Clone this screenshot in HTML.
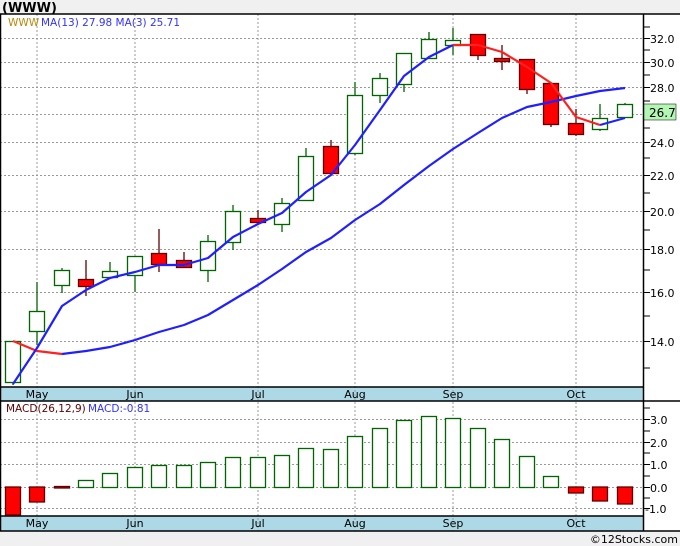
<!DOCTYPE html>
<html><head><style>
body{margin:0;background:#f0f0f0;width:680px;height:546px;overflow:hidden;font-family:"DejaVu Sans",Verdana,sans-serif}
</style></head><body>
<svg width="680" height="546" xmlns="http://www.w3.org/2000/svg" style="position:absolute;left:0;top:0" font-family="DejaVu Sans, Verdana, sans-serif">
<rect x="0" y="14" width="680" height="517" fill="#fff"/>
<text x="2" y="12" font-size="13" font-weight="bold" fill="#000">(WWW)</text>
<rect x="0" y="387" width="643" height="14" fill="#add8e6"/>
<rect x="0" y="516" width="643" height="15" fill="#add8e6"/>
<g stroke="#999" stroke-dasharray="2,2" stroke-width="1">
<line x1="37" y1="14" x2="37" y2="531"/><line x1="135" y1="14" x2="135" y2="531"/>
<line x1="258" y1="14" x2="258" y2="531"/><line x1="355" y1="14" x2="355" y2="531"/>
<line x1="453" y1="14" x2="453" y2="531"/><line x1="576" y1="14" x2="576" y2="531"/>
<line x1="0" y1="38.5" x2="643" y2="38.5"/><line x1="0" y1="62.5" x2="643" y2="62.5"/><line x1="0" y1="87.5" x2="643" y2="87.5"/><line x1="0" y1="114.5" x2="643" y2="114.5"/><line x1="0" y1="142.5" x2="643" y2="142.5"/><line x1="0" y1="175.5" x2="643" y2="175.5"/><line x1="0" y1="211.5" x2="643" y2="211.5"/><line x1="0" y1="249.5" x2="643" y2="249.5"/><line x1="0" y1="292.5" x2="643" y2="292.5"/><line x1="0" y1="341.5" x2="643" y2="341.5"/>
<line x1="0" y1="419.5" x2="643" y2="419.5"/><line x1="0" y1="442.5" x2="643" y2="442.5"/><line x1="0" y1="464.5" x2="643" y2="464.5"/><line x1="0" y1="487.5" x2="643" y2="487.5"/><line x1="0" y1="508.5" x2="643" y2="508.5"/>
</g>
<g font-size="11" fill="#000" text-anchor="middle">
<text x="37" y="398">May</text><text x="135" y="398">Jun</text><text x="258" y="398">Jul</text><text x="355" y="398">Aug</text><text x="453" y="398">Sep</text><text x="576" y="398">Oct</text>
<text x="37" y="527">May</text><text x="135" y="527">Jun</text><text x="258" y="527">Jul</text><text x="355" y="527">Aug</text><text x="453" y="527">Sep</text><text x="576" y="527">Oct</text>
</g>
<g stroke="#000" stroke-width="1.5" fill="none">
<line x1="0.5" y1="14" x2="0.5" y2="531"/>
<line x1="0" y1="14" x2="680" y2="14"/>
<line x1="643.5" y1="14" x2="643.5" y2="531"/>
<line x1="0" y1="387" x2="643" y2="387"/>
<line x1="0" y1="401" x2="680" y2="401"/>
<line x1="0" y1="516" x2="643" y2="516"/>
<line x1="0" y1="531" x2="680" y2="531"/>
</g>
<g stroke="#000" stroke-width="1">
<line x1="643" y1="27" x2="650" y2="27"/><line x1="643" y1="38.5" x2="650" y2="38.5"/><line x1="643" y1="50" x2="650" y2="50"/><line x1="643" y1="62.5" x2="650" y2="62.5"/><line x1="643" y1="75" x2="650" y2="75"/><line x1="643" y1="87.5" x2="650" y2="87.5"/><line x1="643" y1="101" x2="650" y2="101"/><line x1="643" y1="114.5" x2="650" y2="114.5"/><line x1="643" y1="128" x2="650" y2="128"/><line x1="643" y1="142.5" x2="650" y2="142.5"/><line x1="643" y1="158" x2="650" y2="158"/><line x1="643" y1="175.5" x2="650" y2="175.5"/><line x1="643" y1="193" x2="650" y2="193"/><line x1="643" y1="211.5" x2="650" y2="211.5"/><line x1="643" y1="230" x2="650" y2="230"/><line x1="643" y1="249.5" x2="650" y2="249.5"/><line x1="643" y1="270" x2="650" y2="270"/><line x1="643" y1="292.5" x2="650" y2="292.5"/><line x1="643" y1="316" x2="650" y2="316"/><line x1="643" y1="341.5" x2="650" y2="341.5"/><line x1="643" y1="368" x2="650" y2="368"/>
<line x1="643" y1="408" x2="650" y2="408"/><line x1="643" y1="419.5" x2="650" y2="419.5"/><line x1="643" y1="431" x2="650" y2="431"/><line x1="643" y1="442.5" x2="650" y2="442.5"/><line x1="643" y1="453" x2="650" y2="453"/><line x1="643" y1="464.5" x2="650" y2="464.5"/><line x1="643" y1="476" x2="650" y2="476"/><line x1="643" y1="487.5" x2="650" y2="487.5"/><line x1="643" y1="498" x2="650" y2="498"/><line x1="643" y1="508.5" x2="650" y2="508.5"/>
</g>
<g font-size="11" fill="#000">
<text x="650" y="43">32.0</text><text x="650" y="67">30.0</text><text x="650" y="92">28.0</text><text x="650" y="147">24.0</text><text x="650" y="180">22.0</text><text x="650" y="216">20.0</text><text x="650" y="254">18.0</text><text x="650" y="297">16.0</text><text x="650" y="346">14.0</text>
<text x="650" y="424">3.0</text><text x="650" y="447">2.0</text><text x="650" y="469">1.0</text><text x="650" y="492">0.0</text><text x="645" y="513">-1.0</text>
</g>
<rect x="644" y="104" width="32" height="16" fill="#b3f5b3" stroke="#000" stroke-width="0.5"/>
<text x="649" y="117" font-size="12" fill="#000">26.7</text>
<text x="8" y="26" font-size="10.5" fill="#b8860b">WWW</text>
<text x="41" y="26" font-size="10.5" fill="#3333ff">MA(13)  27.98  MA(3)  25.71</text>
<text x="6" y="412" font-size="10.5" fill="#600000">MACD(26,12,9)</text>
<text x="88" y="412" font-size="10.5" fill="#3333ff">MACD:-0.81</text>
<text x="678" y="543" font-size="11" fill="#000" text-anchor="end">©12Stocks.com</text>
<g stroke-width="1.3">
<g stroke="#006400" fill="#fff">
<line x1="13" y1="341" x2="13" y2="385"/><rect x="5.5" y="341.5" width="15" height="41"/>
<line x1="37" y1="282" x2="37" y2="345"/><rect x="29.5" y="311.5" width="15" height="20"/>
<line x1="62" y1="268" x2="62" y2="293"/><rect x="54.5" y="270.5" width="15" height="15"/>
<line x1="110" y1="262" x2="110" y2="278"/><rect x="102.5" y="271.5" width="15" height="6"/>
<line x1="135" y1="256" x2="135" y2="292"/><rect x="127.5" y="256.5" width="15" height="19"/>
<line x1="208" y1="235" x2="208" y2="282"/><rect x="200.5" y="241.5" width="15" height="29"/>
<line x1="233" y1="205" x2="233" y2="250"/><rect x="225.5" y="211.5" width="15" height="31"/>
<line x1="282" y1="198" x2="282" y2="232"/><rect x="274.5" y="203.5" width="15" height="21"/>
<line x1="306" y1="148" x2="306" y2="200"/><rect x="298.5" y="156.5" width="15" height="44"/>
<line x1="355" y1="82" x2="355" y2="155"/><rect x="347.5" y="95.5" width="15" height="58"/>
<line x1="380" y1="73" x2="380" y2="103"/><rect x="372.5" y="78.5" width="15" height="17"/>
<line x1="404" y1="53" x2="404" y2="92"/><rect x="396.5" y="53.5" width="15" height="31"/>
<line x1="429" y1="32" x2="429" y2="58"/><rect x="421.5" y="39.5" width="15" height="19"/>
<line x1="453" y1="28" x2="453" y2="55"/><rect x="445.5" y="40.5" width="15" height="5"/>
<line x1="600" y1="104" x2="600" y2="131"/><rect x="592.5" y="118.5" width="15" height="11"/>
<line x1="625" y1="103" x2="625" y2="117"/><rect x="617.5" y="104.5" width="15" height="13"/>
</g>
<g stroke="#600000" fill="#ff0000">
<line x1="86" y1="260" x2="86" y2="296"/><rect x="78.5" y="279.5" width="15" height="7"/>
<line x1="159" y1="229" x2="159" y2="272"/><rect x="151.5" y="253.5" width="15" height="11"/>
<line x1="184" y1="252" x2="184" y2="268"/><rect x="176.5" y="260.5" width="15" height="7"/>
<line x1="258" y1="210" x2="258" y2="225"/><rect x="250.5" y="218.5" width="15" height="4"/>
<line x1="331" y1="140" x2="331" y2="175"/><rect x="323.5" y="146.5" width="15" height="27"/>
<line x1="478" y1="34" x2="478" y2="60"/><rect x="470.5" y="34.5" width="15" height="21"/>
<line x1="502" y1="45" x2="502" y2="70"/><rect x="494.5" y="58.5" width="15" height="3"/>
<line x1="527" y1="59" x2="527" y2="94"/><rect x="519.5" y="59.5" width="15" height="30"/>
<line x1="551" y1="83" x2="551" y2="127"/><rect x="543.5" y="83.5" width="15" height="41"/>
<line x1="576" y1="109" x2="576" y2="136"/><rect x="568.5" y="123.5" width="15" height="11"/>
</g>
</g>
<g fill="none" stroke-width="2.2" stroke-linejoin="round">
<polyline stroke="#ff2020" points="13,341 37,351 62,354"/>
<polyline stroke="#2020ff" points="62,354 86,351 110,347 135,340 159,332 184,325 208,315 233,300 258,285 282,269 306,252 331,238 355,220 380,204 404,185 429,166 453,149 478,133 502,118 527,107 551,102 576,96 600,91 625,88"/>
<polyline stroke="#2020ff" points="13,384 37,348 62,306 86,290 110,278 135,272 159,265 184,265 208,258 233,237 258,224 282,213 306,192 331,175 355,145 380,110 404,76 429,57 453,45"/>
<polyline stroke="#ff2020" points="453,45 478,45 502,52 527,67 551,83 576,117 600,125"/>
<polyline stroke="#2020ff" points="600,125 625,118"/>
</g>
<g stroke-width="1.3">
<g stroke="#006400" fill="#fff">
<rect x="78.5" y="480.5" width="15" height="7"/>
<rect x="102.5" y="473.5" width="15" height="14"/>
<rect x="127.5" y="467.5" width="15" height="20"/>
<rect x="151.5" y="465.5" width="15" height="22"/>
<rect x="176.5" y="465.5" width="15" height="22"/>
<rect x="200.5" y="462.5" width="15" height="25"/>
<rect x="225.5" y="457.5" width="15" height="30"/>
<rect x="250.5" y="457.5" width="15" height="30"/>
<rect x="274.5" y="455.5" width="15" height="32"/>
<rect x="298.5" y="448.5" width="15" height="39"/>
<rect x="323.5" y="449.5" width="15" height="38"/>
<rect x="347.5" y="436.5" width="15" height="51"/>
<rect x="372.5" y="428.5" width="15" height="59"/>
<rect x="396.5" y="420.5" width="15" height="67"/>
<rect x="421.5" y="416.5" width="15" height="71"/>
<rect x="445.5" y="418.5" width="15" height="69"/>
<rect x="470.5" y="428.5" width="15" height="59"/>
<rect x="494.5" y="439.5" width="15" height="48"/>
<rect x="519.5" y="456.5" width="15" height="31"/>
<rect x="543.5" y="476.5" width="15" height="11"/>
</g>
<g stroke="#600000" fill="#ff0000">
<rect x="5.5" y="487" width="15" height="28"/>
<rect x="29.5" y="487" width="15" height="15"/>
<rect x="54.5" y="486.5" width="15" height="1.5"/>
<rect x="568.5" y="487" width="15" height="6"/>
<rect x="592.5" y="487" width="15" height="14"/>
<rect x="617.5" y="487" width="15" height="17"/>
</g>
</g>
</svg>
</body></html>
